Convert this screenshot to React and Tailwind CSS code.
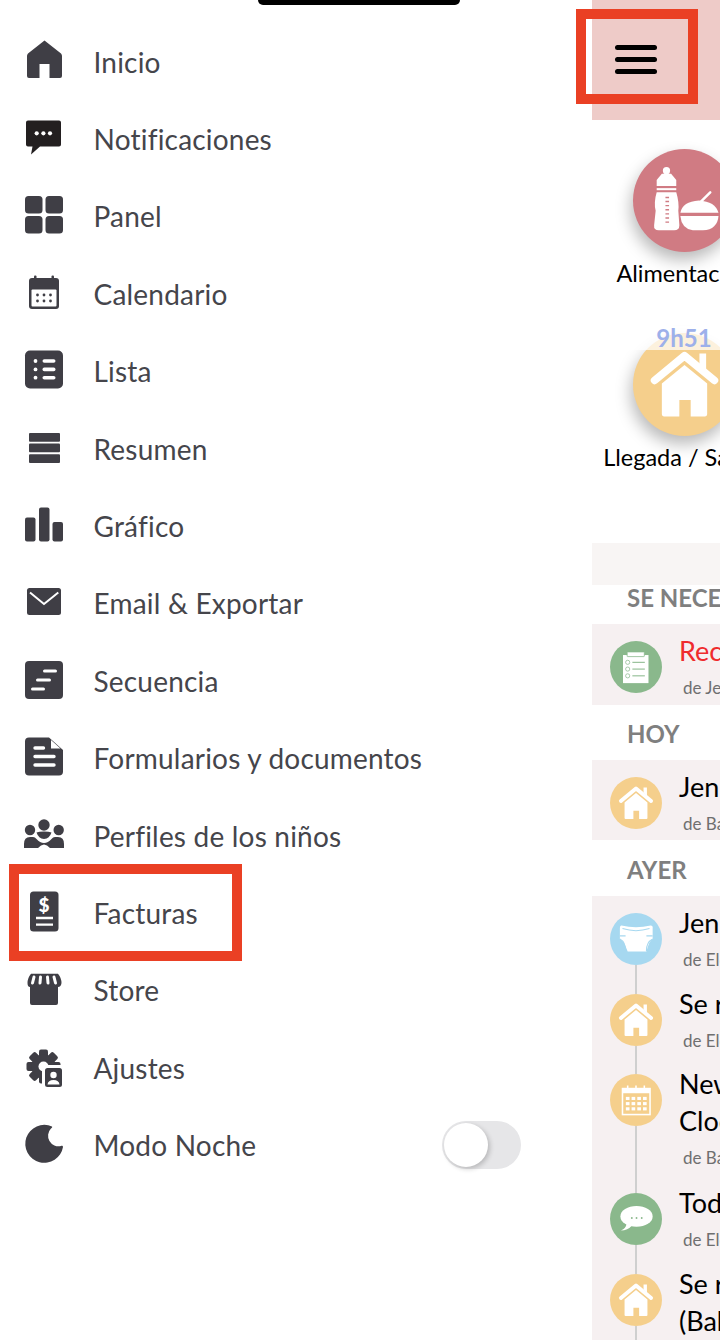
const dark = "#3f3e45";

// menu icons are drawn on a 44x44 box centered on the row
const Ico = ({ children }) => (
  <svg viewBox="0 0 44 44" fill={dark} className="w-[44px] h-[44px] shrink-0 overflow-visible">
    {children}
  </svg>
);

const HomeIcon = () => (
  <Ico>
    <path d="M22.5 0.5 L39 13.5 Q40 14.5 40 16 V36 Q40 38 38 38 H27.5 V24 H17.5 V38 H7 Q5 38 5 36 V16 Q5 14.5 6 13.5 Z" />
  </Ico>
);

const ChatIcon = () => (
  <Ico>
    <path fill="#231f20" d="M6 3.5 H37 Q39 3.5 39 5.5 V27.5 Q39 29.5 37 29.5 H18 L9 37.5 L10.5 29.5 H6 Q4 29.5 4 27.5 V5.5 Q4 3.5 6 3.5 Z" />
    <circle cx="14.7" cy="16.3" r="2.1" fill="#fff" />
    <circle cx="21.4" cy="16.3" r="2.1" fill="#fff" />
    <circle cx="28" cy="16.3" r="2.1" fill="#fff" />
  </Ico>
);

const PanelIcon = () => (
  <Ico>
    <rect x="3" y="2" width="17.5" height="17.5" rx="3.5" />
    <rect x="23.5" y="2" width="17.5" height="17.5" rx="3.5" />
    <rect x="3" y="22" width="17.5" height="17.5" rx="3.5" />
    <rect x="23.5" y="22" width="17.5" height="17.5" rx="3.5" />
  </Ico>
);

const CalIcon = () => (
  <Ico>
    <rect x="7" y="6" width="30" height="31" rx="3" />
    <rect x="12" y="3.5" width="2.5" height="5" rx="1" />
    <rect x="29.5" y="3.5" width="2.5" height="5" rx="1" />
    <rect x="9.5" y="17.5" width="25" height="17" rx="1" fill="#fff" />
    {[15.5, 22, 28.5].map((x) => (
      <g key={x} fill={dark}>
        <circle cx={x} cy="23" r="1.4" />
        <circle cx={x} cy="29" r="1.4" />
      </g>
    ))}
  </Ico>
);

const ListIcon = () => (
  <Ico>
    <rect x="3" y="1.5" width="38" height="38" rx="5" />
    {[12, 20.4, 28.7].map((y) => (
      <g key={y} fill="#fff">
        <circle cx="13.5" cy={y} r="1.9" />
        <rect x="20.5" y={y - 1.8} width="13" height="3.6" rx="1.8" />
      </g>
    ))}
  </Ico>
);

const SummaryIcon = () => (
  <Ico>
    <rect x="7" y="6" width="31" height="8.7" rx="1" />
    <rect x="7" y="16.6" width="31" height="8.7" rx="1" />
    <rect x="7" y="27.2" width="31" height="8.7" rx="1" />
  </Ico>
);

const ChartIcon = () => (
  <Ico>
    <rect x="3" y="13.6" width="10.5" height="24" rx="2" />
    <rect x="17" y="3.6" width="10.5" height="34" rx="2" />
    <rect x="30.5" y="18" width="10.5" height="19.6" rx="2" />
  </Ico>
);

const MailIcon = () => (
  <Ico>
    <rect x="5" y="7" width="34" height="27" rx="2.5" />
    <path d="M8 11.5 L22 23 L36.3 11.5" fill="none" stroke="#fff" strokeWidth="2" />
  </Ico>
);

const SeqIcon = () => (
  <Ico>
    <rect x="3" y="2" width="38" height="38" rx="4" />
    <path d="M22.5 12 H33.5 M15.5 21 H27.5 M10.5 30 H21.5" stroke="#fff" strokeWidth="3" strokeLinecap="round" />
  </Ico>
);

const DocIcon = () => (
  <Ico>
    <path d="M7 1.5 H27 L41 14 V35.5 Q41 39.5 37 39.5 H7 Q3 39.5 3 35.5 V5.5 Q3 1.5 7 1.5 Z" />
    <path d="M29 4 L38.5 12.5 H29 Z" fill="#fff" />
    <path d="M13 12 H21.5 M13 20.5 H32 M13 29 H32" stroke="#fff" strokeWidth="3.4" strokeLinecap="round" />
  </Ico>
);

const KidsIcon = () => (
  <Ico>
    <circle cx="22" cy="11" r="5.7" />
    <circle cx="8" cy="16" r="5.2" />
    <circle cx="36.7" cy="16" r="5.2" />
    <path d="M2 30 Q2 23 8 23 H11 Q13 23 14.5 25 Q18 29 22 29 Q26 29 29.5 25 Q31 23 33 23 H36 Q42 23 42 30 V34 H28 Q25 30.5 22 30.5 Q19 30.5 16 34 H2 Z" />
    <path d="M14.5 18.5 Q17 17.5 22 17.5 Q27 17.5 29.5 18.5 Q27.5 24.5 22 25 Q16.5 24.5 14.5 18.5 Z" />
  </Ico>
);

const BillIcon = () => (
  <Ico>
    <rect x="8" y="0.6" width="28.5" height="40" rx="3.5" />
    <text x="22" y="20.5" textAnchor="middle" fill="#fff" fontSize="19" fontWeight="900" fontFamily="Lato, sans-serif">$</text>
    <path d="M14 27 H31 M14 33.6 H31" stroke="#fff" strokeWidth="2.4" />
  </Ico>
);

const StoreIcon = () => (
  <Ico>
    <path d="M9 5.7 H36 Q39.5 10 39.5 15 Q39 19 36 19 V35 Q36 37 34 37 H10 Q8 37 8 35 V19 Q5.5 19 5.5 15 Q5.5 10 9 5.7 Z" />
    <path d="M12 9 L10.5 15 M18.5 9 L18 15 M25.5 9 L26 15 M32 9 L33.5 15" stroke="#fff" strokeWidth="3" strokeLinecap="round" />
  </Ico>
);

const SettingsIcon = () => (
  <Ico>
    {[0, 45, 90, 135].map((a) => (
      <rect key={a} x="17" y="3.5" width="9" height="34" rx="2" transform={`rotate(${a} 21.5 20.5)`} />
    ))}
    <circle cx="21.5" cy="20.5" r="12" />
    <circle cx="21.5" cy="20.5" r="5" fill="#fff" />
    <rect x="20" y="19" width="22" height="25" rx="2" fill="#fff" />
    <rect x="23" y="22" width="17" height="19" rx="2.5" />
    <circle cx="31.5" cy="29" r="3.2" fill="#fff" />
    <path d="M25.5 38.5 Q26 34 31.5 34 Q37 34 37.5 38.5 Z" fill="#fff" />
  </Ico>
);

const MoonIcon = () => (
  <Ico>
    <path d="M30 3.5 A19 19 0 1 0 41 24 C41 23 40 22.5 39 23 A10.5 10.5 0 0 1 29 5.5 C30 5 30.5 4 30 3.5 Z" />
  </Ico>
);

const menu = [
  ["Inicio", HomeIcon],
  ["Notificaciones", ChatIcon],
  ["Panel", PanelIcon],
  ["Calendario", CalIcon],
  ["Lista", ListIcon],
  ["Resumen", SummaryIcon],
  ["Gráfico", ChartIcon],
  ["Email & Exportar", MailIcon],
  ["Secuencia", SeqIcon],
  ["Formularios y documentos", DocIcon],
  ["Perfiles de los niños", KidsIcon],
  ["Facturas", BillIcon],
  ["Store", StoreIcon],
  ["Ajustes", SettingsIcon],
];

// white glyphs for the round activity badges, on a 100x100 box
const House = () => (
  <>
    <path d="M21 46 L50 22 L79 46" fill="none" stroke="#fff" strokeWidth="7.5" strokeLinecap="round" strokeLinejoin="round" />
    <path d="M64.5 20 H71 V36 L64.5 30 Z" fill="#fff" />
    <path d="M50 31 L72 49 V79 Q72 81 70 81 H56 V65 H45 V81 H30 Q28 81 28 79 V49 Z" fill="#fff" />
  </>
);

const Feeding = () => (
  <>
    <circle cx="32.5" cy="21" r="3.5" fill="#fff" />
    <path d="M28 24 H37 L42 30 V36 H23 V30 Z" fill="#fff" />
    <rect x="23" y="38" width="19" height="2" fill="#fff" />
    <path d="M23 42 H42 Q45 52 44 60 L45 74 Q45 79 40 79 H25 Q20 79 20.5 74 L22 60 Q20 52 23 42 Z" fill="#fff" />
    <path d="M31.5 47 H35 M31.5 51 H35 M31.5 55 H35 M31.5 59 H35 M31.5 63 H35 M31.5 67 H35 M31.5 71 H35" stroke="#d07b83" strokeWidth="1.4" />
    <path d="M46 62 Q48 51 64 50 Q80 51 83 62 Z" fill="#fff" />
    <path d="M46 65 H83 Q82 78 68 79 H58 Q47 77 46 65 Z" fill="#fff" />
    <path d="M65 52 L75 42" stroke="#fff" strokeWidth="2.4" strokeLinecap="round" />
  </>
);

const Clipboard = () => (
  <>
    <rect x="25" y="27" width="49" height="54" fill="#fff" />
    <rect x="33" y="21" width="33" height="9" rx="1" fill="#fff" stroke="#8ab88c" strokeWidth="1.5" />
    {[41, 54, 67].map((y) => (
      <g key={y}>
        <circle cx="34" cy={y} r="4" fill="none" stroke="#8ab88c" strokeWidth="1.4" />
        <path d={`M43 ${y} H67`} stroke="#8ab88c" strokeWidth="2" />
      </g>
    ))}
  </>
);

const Diaper = () => (
  <>
    <path d="M22 24 Q50 31 78 24 Q83 24 82 30 V50 Q76 52 70 74 H34 Q26 52 19 50 V30 Q19 24 22 24 Z" fill="#fff" />
    <path d="M24 30 Q50 38 76 30 M19 44 H30 M82 44 H70 M30 73 Q30 56 19 50 M70 73 Q70 56 82 50" fill="none" stroke="#a6d8f0" strokeWidth="2" />
  </>
);

const Calendar = () => (
  <>
    <rect x="24" y="28" width="53" height="50" fill="none" stroke="#fff" strokeWidth="3" />
    <rect x="24" y="28" width="53" height="9" fill="#fff" />
    <path d="M34 22 V32 M50 22 V32 M66 22 V32" stroke="#fff" strokeWidth="3" />
    {[44, 54, 64].map((y) =>
      [34, 45, 56, 67].map((x) => <rect key={`${x}-${y}`} x={x - 3.5} y={y} width="7" height="6" fill="#fff" />)
    )}
  </>
);

const Bubble = () => (
  <>
    <ellipse cx="51" cy="45" rx="31" ry="20" fill="#fff" />
    <path d="M32 58 Q31 68 21 72 Q34 72 42 63 Z" fill="#fff" />
    {[42, 51, 61].map((x) => (
      <circle key={x} cx={x} cy="48" r="1.8" fill="#8ab88c" />
    ))}
  </>
);

const Badge = ({ bg, size, children }) => (
  <div className={`${size} ${bg} rounded-full shrink-0`}>
    <svg viewBox="0 0 100 100" className="w-full h-full">
      {children}
    </svg>
  </div>
);

const small = "w-[52px] h-[52px]";
const big = "w-[103px] h-[103px] shadow-[-2px_8px_16px_rgba(0,0,0,0.28)]";

const Row = ({ bg, icon, lines, from, h, red, linked }) => (
  <div className={`flex pl-[17.5px] ${h}`}>
    <div className="flex flex-col items-center w-[52px] shrink-0">
      <Badge bg={bg} size={small}>{icon}</Badge>
      {linked && <div className="flex-1 w-[2px] bg-[#cfcfcf]" />}
    </div>
    <div className="ml-[17.5px] -mt-[9px] whitespace-nowrap">
      {lines.map((l) => (
        <div key={l} className={`text-[27px] leading-[37px] ${red ? "text-[#ef2b2d]" : "text-black"}`}>{l}</div>
      ))}
      <div className="pl-[4px] text-[17px] leading-[37px] text-[#6f6f6f]">{from}</div>
    </div>
  </div>
);

const Heading = ({ children, h }) => (
  <div className={`flex items-end shrink-0 pl-[35px] pb-[13px] ${h} text-[24px] leading-[26px] font-bold text-[#7f7f7f] whitespace-nowrap`}>
    {children}
  </div>
);

const App = () => {
  return (
    <div className="relative flex w-[720px] h-screen overflow-hidden bg-white font-['Lato','Liberation_Sans',sans-serif]">
      {/* Notch */}
      <div className="absolute left-[258px] top-0 w-[202px] h-[5px] bg-black rounded-b-[12px]" />

      {/* Menu */}
      <div className="w-[592px] shrink-0 pt-[23px] pl-[22px] pr-[71px]">
        {menu.map(([label, Icon]) => (
          <div key={label} className="flex items-center h-[77.4px] gap-[27.5px] text-[28px] tracking-[0.2px] text-[#45454b]">
            <Icon />
            <span>{label}</span>
          </div>
        ))}
        <div className="flex items-center h-[77.4px] gap-[27.5px] text-[28px] tracking-[0.2px] text-[#45454b]">
          <MoonIcon />
          <span>Modo Noche</span>
          <div className="ml-auto w-[79px] h-[48px] rounded-full bg-[#e6e6e8] p-[2px]">
            <div className="w-[44px] h-[44px] rounded-full bg-white shadow-[2px_2px_5px_rgba(0,0,0,0.2)]" />
          </div>
        </div>
      </div>

      {/* Page behind the menu */}
      <div className="flex-1 min-w-0 flex flex-col overflow-hidden">
        <div className="h-[120px] shrink-0 bg-[#eecbc8] pl-[23px] pt-[45px]">
          <div className="flex flex-col gap-[7px] w-[42px]">
            <div className="h-[5px] rounded-full bg-black" />
            <div className="h-[5px] rounded-full bg-black" />
            <div className="h-[5px] rounded-full bg-black" />
          </div>
        </div>

        <div className="w-[184px] shrink-0 flex flex-col items-center pt-[29px] text-[23.5px] leading-[30px] text-black">
          <Badge bg="bg-[#d07b83]" size={big}><Feeding /></Badge>
          <div className="mt-[6px] whitespace-nowrap">Alimentación</div>
          <div className="relative mt-[45px]">
            <Badge bg="bg-[#f5cf8c]" size={big}><House /></Badge>
            <div className="absolute -top-[7px] -left-[40px] -right-[40px] h-[24px] bg-white/70 text-center text-[24px] leading-[24px] font-bold text-[#9db0ea]">9h51</div>
          </div>
          <div className="mt-[6px] whitespace-nowrap">Llegada / Salida</div>
        </div>

        <div className="mt-[71px] h-[42px] shrink-0 bg-[#f8f5f4]" />
        <Heading h="h-[39px]">SE NECESITA</Heading>
        <div className="bg-[#f6f0f1] pt-[17px] h-[81px] shrink-0">
          <Row bg="bg-[#8ab88c]" icon={<Clipboard />} lines={["Recordatorio"]} from="de Jenny" h="h-[64px]" red />
        </div>
        <Heading h="h-[55px]">HOY</Heading>
        <div className="bg-[#f6f0f1] pt-[17px] h-[80px] shrink-0">
          <Row bg="bg-[#f5cf8c]" icon={<House />} lines={["Jenny"]} from="de Baby" h="h-[63px]" />
        </div>
        <Heading h="h-[56px]">AYER</Heading>
        <div className="flex-1 bg-[#f6f0f1] pt-[17px]">
          <Row bg="bg-[#a6d8f0]" icon={<Diaper />} lines={["Jenny"]} from="de Elena" h="h-[81px]" linked />
          <Row bg="bg-[#f5cf8c]" icon={<House />} lines={["Se registró"]} from="de Elena" h="h-[80px]" linked />
          <Row bg="bg-[#f5cf8c]" icon={<Calendar />} lines={["New", "Clock"]} from="de Baby" h="h-[119px]" linked />
          <Row bg="bg-[#8ab88c]" icon={<Bubble />} lines={["Todo"]} from="de Elena" h="h-[81px]" linked />
          <Row bg="bg-[#f5cf8c]" icon={<House />} lines={["Se registró", "(Baby"]} from="de Elena" h="h-[81px]" linked />
        </div>
      </div>

      {/* Red annotation boxes */}
      <div className="absolute left-[576px] top-[9px] w-[122px] h-[95px] border-[10px] border-[#ea4024]" />
      <div className="absolute left-[9px] top-[864px] w-[233px] h-[97px] border-[10px] border-[#ea4024]" />
    </div>
  );
};

export default App;
